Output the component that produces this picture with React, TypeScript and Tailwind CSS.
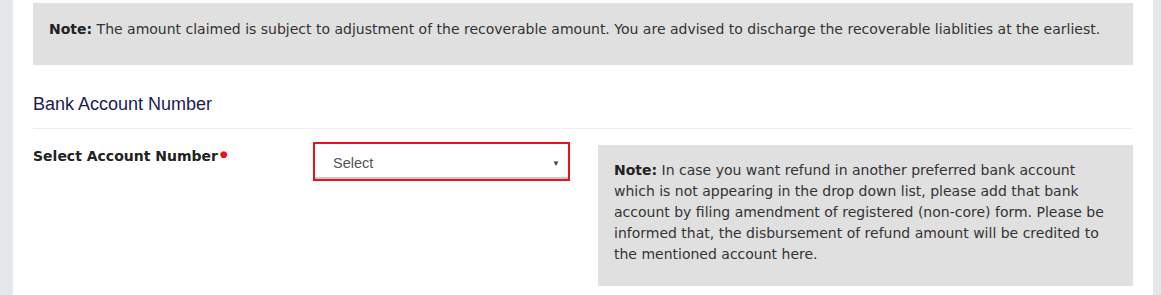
export default function App() {
  return (
    <div className="flex h-[295px] w-[1161px] overflow-hidden bg-[#e5e8eb]">
      <div className="ml-[13px] w-[1140px] bg-white px-[20px] pt-[3px]">
        <div className="h-[62px] bg-[#e0e0e0] px-[16px] pt-[17px] font-['DejaVu_Sans',Verdana,sans-serif] text-[14px] leading-[18px] text-[#333]">
          <p>
            <span className="font-bold text-[#222]">Note:</span> The amount claimed is subject to adjustment of the recoverable amount. You are advised to discharge the recoverable liablities at the earliest.
          </p>
        </div>

        <h3 className="mt-[29px] pb-[14px] font-['Liberation_Sans',Arial,sans-serif] text-[18px] leading-[20px] text-[#1b1b55]">
          Bank Account Number
        </h3>
        <div className="border-t border-[#eeeeee]" />

        <div className="mt-[13px] flex items-start">
          <label className="w-[280px] pt-[4px] font-['DejaVu_Sans',Verdana,sans-serif] text-[14px] font-bold text-[#222]">
            Select Account Number<span className="relative -top-[4px] ml-[2px] text-[9px] text-[#e8141c]">●</span>
          </label>
          <div className="flex h-[39px] w-[257px] items-center justify-between border-2 border-[#e8141c] bg-white pb-[1px] pl-[18px] pr-[8px] pt-[5px] shadow-[inset_0_-2px_0_#c8c8c8] font-['Liberation_Sans',Arial,sans-serif] text-[14.5px] text-[#555]">
            <span>Select</span>
            <span className="text-[8px] text-[#444]">▼</span>
          </div>
          <div className="ml-[28px] mt-[3px] h-[141px] flex-1 whitespace-nowrap bg-[#e0e0e0] px-[16px] pt-[15px] font-['DejaVu_Sans',Verdana,sans-serif] text-[14px] leading-[21px] text-[#333]">
            <span className="font-bold text-[#222]">Note:</span> In case you want refund in another preferred bank account<br />
            which is not appearing in the drop down list, please add that bank<br />
            account by filing amendment of registered (non-core) form. Please be<br />
            informed that, the disbursement of refund amount will be credited to<br />
            the mentioned account here.
          </div>
        </div>
      </div>
    </div>
  )
}
